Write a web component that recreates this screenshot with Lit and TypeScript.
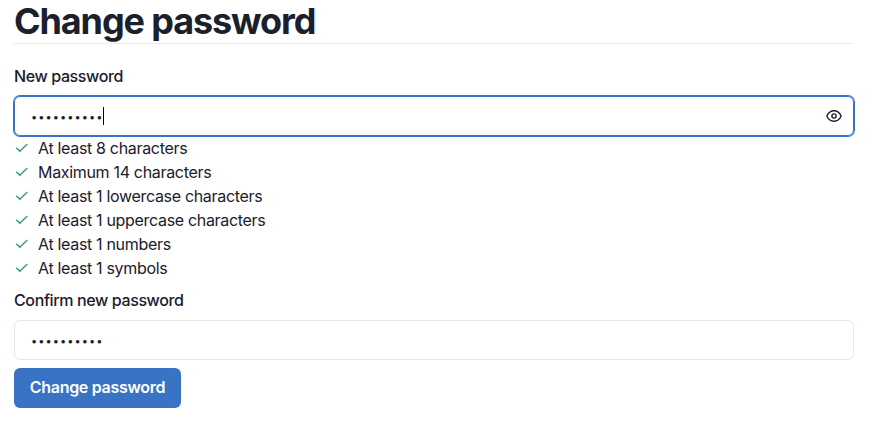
import { LitElement, html, css } from "lit";
import { customElement } from "lit/decorators.js";

const RULES = [
  "At least 8 characters",
  "Maximum 14 characters",
  "At least 1 lowercase characters",
  "At least 1 uppercase characters",
  "At least 1 numbers",
  "At least 1 symbols",
];

@customElement("app-root")
export class AppRoot extends LitElement {
  static styles = css`
    :host {
      display: block;
      box-sizing: border-box;
      height: 422px;
      padding: 0 18px 0 14px;
      background: #fff;
      color: #1a202c;
      font: 400 16px/24px Inter, "Liberation Sans", sans-serif;
      letter-spacing: -0.32px;
    }
    * { box-sizing: border-box; }
    h1 {
      margin: 0;
      height: 44px;
      border-bottom: 1px solid #ebedf0;
      font-size: 36px;
      line-height: 43px;
      font-weight: 700;
      letter-spacing: -1.12px;
      white-space: nowrap;
    }
    .label {
      display: block;
      font-weight: 500;
      letter-spacing: -0.38px;
    }
    .first { margin: 20px 0 8px; }
    .second { margin: 8px 0; }
    .field {
      display: flex;
      align-items: center;
      height: 40px;
      padding: 0 11px 0 16px;
      border: 1px solid #e2e8f0;
      border-radius: 6px;
    }
    .focused {
      border-color: #3973c4;
      box-shadow: 0 0 0 1px #3973c4;
    }
    .dots {
      padding-top: 1px;
      font-size: 11px;
      letter-spacing: 1.05px;
      line-height: 16px;
    }
    .caret { width: 1px; height: 18px; background: #000; }
    .eye { width: 16px; height: 16px; margin-left: auto; }
    ul { margin: 0; padding: 0; list-style: none; }
    li { display: flex; height: 24px; white-space: nowrap; }
    .check { width: 16px; height: 16px; margin: 4px 8px 0 0; color: #38915a; }
    button {
      display: block;
      width: 167px;
      height: 40px;
      margin-top: 8px;
      padding: 0 0 2px;
      border: 0;
      border-radius: 6px;
      background: #3973c4;
      color: #fff;
      font: inherit;
      font-weight: 600;
      letter-spacing: -0.3px;
      white-space: nowrap;
    }
  `;

  render() {
    return html`
      <h1><span>Change password</span></h1>
      <span class="label first">New password</span>
      <div class="field focused">
        <span class="dots">••••••••••</span><span class="caret"></span>
        <svg class="eye" viewBox="0 0 16 16" fill="none" stroke="#1a202c" stroke-width="1.4">
          <path d="M.8 8C2.4 4.5 5 2.7 8 2.7s5.6 1.8 7.2 5.3c-1.6 3.5-4.2 5.3-7.2 5.3S2.4 11.500.8 8Z" stroke-linejoin="round" />
          <circle cx="8" cy="8" r="2.1" />
        </svg>
      </div>
      <ul>
        ${RULES.map(
          (rule) => html`<li>
            <svg class="check" viewBox="0 0 16 16" fill="none" stroke="currentColor" stroke-width="1.3">
              <path d="M2.300 7.800 5.800 11.300 13.400 3.900" />
            </svg>
            <span>${rule}</span>
          </li>`
        )}
      </ul>
      <span class="label second">Confirm new password</span>
      <div class="field"><span class="dots">••••••••••</span></div>
      <button>Change password</button>
    `;
  }
}
